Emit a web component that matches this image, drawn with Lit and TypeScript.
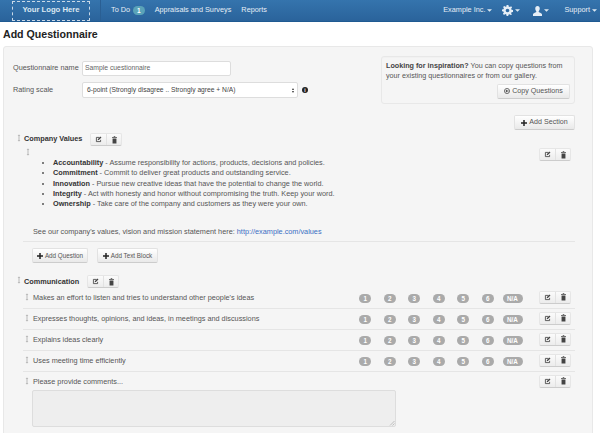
import { LitElement, html, css, svg } from "lit";
import { customElement } from "lit/decorators.js";

const caret = html`<svg class="caret" viewBox="0 0 6 3" width="5" height="3"><path d="M0 0h6L3 3z" fill="currentColor"/></svg>`;
const handle = html`<svg class="handle" viewBox="0 0 5 9" width="4" height="8"><path d="M2.500 0 4.200 1.800H3v5.400h1.200L2.500 9 .8 7.200H2V1.800H.8z" fill="#aaa"/></svg>`;
const plus = html`<svg class="ic" viewBox="0 0 8 8" width="6" height="6"><path d="M3 0h2v3h3v2H5v3H3V5H0V3h3z" fill="#222"/></svg>`;
const edit = svg`<path d="M6.500 2H2v6h6V5.500" fill="none" stroke="#444" stroke-width="1.200"/><path d="M3.800 6.200 4.200 4.400 8 .8l1.200 1.200-3.700 3.800z" fill="#444"/>`;
const trash = svg`<path d="M3.500 1V.2h2V1h2.200v1.200H1.300V1zM2 3h5v6.500H2z" fill="#444"/>`;
const tools = html`<span class="group">
  <span class="seg"><svg viewBox="0 0 10 10" width="7" height="7">${edit}</svg></span>
  <span class="seg"><svg viewBox="0 0 9 10" width="7" height="8">${trash}</svg></span>
</span>`;

const values: [string, string][] = [
  ["Accountability", "Assume responsibility for actions, products, decisions and policies."],
  ["Commitment", "Commit to deliver great products and outstanding service."],
  ["Innovation", "Pursue new creative ideas that have the potential to change the world."],
  ["Integrity", "Act with honesty and honor without compromising the truth. Keep your word."],
  ["Ownership", "Take care of the company and customers as they were your own."],
];
const questions = [
  "Makes an effort to listen and tries to understand other people's ideas",
  "Expresses thoughts, opinions, and ideas, in meetings and discussions",
  "Explains ideas clearly",
  "Uses meeting time efficiently",
];
const scale = ["1", "2", "3", "4", "5", "6", "N/A"];

@customElement("app-root")
export class AppRoot extends LitElement {
  static styles = css`
    :host { display: block; width: 600px; height: 433px; overflow: hidden; background: #fff;
      font-family: "Liberation Sans", Arial, sans-serif; font-size: 7.300px; line-height: 10.300px; color: #555; }
    * { box-sizing: border-box; }
    svg { display: block; flex: none; }
    .nav { height: 22px; display: flex; align-items: center; color: #e6eef6; font-size: 7.300px;
      background: linear-gradient(#3574ad, #2a639b); border-bottom: 1px solid #1f5a92; padding-left: 12px; }
    .logo { width: 78px; height: 20px; border: 1px dashed #c9d9e8; display: flex; align-items: center; justify-content: center;
      font-weight: bold; font-size: 7.700px; color: #dce8f2; margin-right: 10px; }
    .sep { width: 1px; height: 21px; background: #2a5f93; margin-right: 10px; }
    .links { display: flex; align-items: center; flex: 1; }
    .badge { background: #5aa3b8; color: #fff; border-radius: 6px; font-size: 6.500px; font-weight: bold; padding: 0 4px; margin: 0 10px 0 3px; line-height: 9px; }
    .l { margin-right: 10px; }
    .right { display: flex; align-items: center; padding-right: 3px; }
    .right span { display: flex; align-items: center; gap: 2px; }
    .caret { color: #dce8f2; }
    h1 { margin: 0; font-size: 10.600px; line-height: 14px; color: #222; font-weight: bold; padding: 5px 0 5px 3px; }
    .panel { margin-left: 3px; width: 590px; height: 400px; background: #f5f5f5; border: 1px solid #e8e8e8; border-radius: 3px; padding: 9px 17px 0 9px; }
    .top { display: flex; justify-content: space-between; align-items: flex-start; }
    .form { display: grid; grid-template-columns: 69px auto; row-gap: 6px; align-items: center; margin-top: 5px; justify-content: start; }
    .form label { color: #555; white-space: nowrap; }
    .input { width: 149px; height: 15px; background: #fff; border: 1px solid #ddd; border-radius: 2px; padding-left: 2px; display: flex; align-items: center; color: #666; font-size: 6.800px; }
    .selectrow { display: flex; align-items: center; gap: 4px; }
    .select { width: 216px; height: 16px; background: #fff; border: 1px solid #ddd; border-radius: 2px; padding: 0 3px 0 4px; display: flex; align-items: center; justify-content: space-between; color: #444; font-size: 6.700px; }
    .updown { display: flex; flex-direction: column; gap: 1px; }
    .updown i { display: block; width: 0; height: 0; border-left: 1.500px solid transparent; border-right: 1.500px solid transparent; }
    .updown i:first-child { border-bottom: 2.500px solid #333; }
    .updown i:last-child { border-top: 2.500px solid #333; }
    .info { width: 6px; height: 6px; background: #222; color: #fff; border-radius: 50%; font-size: 5px; line-height: 6px; text-align: center; font-weight: bold; }
    .well { width: 194px; height: 48px; border: 1px solid #e8e8e8; border-radius: 3px; background: #f5f5f5; padding: 4px 4px 0; color: #555; box-shadow: inset 0 1px 1px rgba(0,0,0,.02); font-size: 7.200px; }
    .well b { color: #444; }
    .wellbtn { display: flex; justify-content: flex-end; margin-top: 2px; }
    .btn { display: inline-flex; align-items: center; justify-content: center; gap: 2px; height: 15px; font-size: 7.100px; color: #555;
      background: linear-gradient(#fff, #e9e9e9); border: 1px solid #e2e2e2; border-bottom-color: #ccc; border-radius: 2px; white-space: nowrap; }
    .btn.small { font-size: 6.300px; }
    .addsec { display: flex; justify-content: flex-end; margin-top: 11px; }
    .group { display: inline-flex; height: 13px; border: 1px solid #e6e6e6; border-bottom-color: #ccc; border-radius: 2px; background: linear-gradient(#fbfbfb, #ececec); }
    .seg { width: 15px; display: flex; align-items: center; justify-content: center; }
    .seg + .seg { border-left: 1px solid #e2e2e2; }
    .sechead { display: flex; align-items: center; height: 13px; padding-left: 4px; }
    .sechead .handle { margin-right: 3px; margin-top: -3px; }
    .sechead b { color: #333; margin-right: 8px; }
    .block { margin-left: 10px; }
    .blockh { height: 12px; padding: 2px 0 0 3px; }
    .blockbody { padding-left: 10px; border-bottom: 1px solid #e5e5e5; padding-bottom: 4px; position: relative; }
    ul { margin: 0; padding: 0 0 0 20px; }
    li { line-height: 10.300px; color: #555; }
    li b { color: #333; }
    .see { margin: 18px 0 0; height: 10px; }
    a { color: #3a6fc4; text-decoration: none; }
    .blocktools { position: absolute; right: 4px; top: -10px; }
    .adds { display: flex; gap: 9px; margin: 6px 0 0 9px; }
    .q { display: flex; align-items: center; height: 21px; border-bottom: 1px solid #e5e5e5; margin-left: 10px; padding-left: 2px; }
    .q:last-child { border: 0; }
    .q .handle { margin-right: 4px; margin-top: -2px; }
    .q .t { flex: 1; color: #555; margin-top: -1px; }
    .q .group { margin-right: 4px; margin-top: -2px; }
    .pills { display: flex; margin-right: 14px; margin-top: 1px; }
    .pill { width: 24.500px; display: flex; justify-content: center; }
    .pill span { background: #aaa; color: #fff; font-weight: bold; font-size: 6.300px; line-height: 9px; height: 9px; min-width: 12px; border-radius: 5px; padding: 0 2px; text-align: center; }
    .pill.na { width: 25px; }
    .pill.na span { padding: 0 3px; min-width: 20px; }
    .ta { position: relative; width: 364px; height: 37px; background: #eee; border: 1px solid #ddd; border-radius: 2px; margin-left: 19px; }
    .grip { position: absolute; right: 0; bottom: 0; }
    .lastq { height: 18px; border: 0; padding-top: 2px; }
  `;

  render() {
    return html`
      <div class="nav">
        <div class="logo">Your Logo Here</div>
        <div class="sep"></div>
        <div class="links">
          <span>To Do</span><span class="badge">1</span>
          <span class="l">Appraisals and Surveys</span>
          <span class="l">Reports</span>
        </div>
        <div class="right">
          <span style="margin-right:10px">Example Inc. ${caret}</span>
          <span style="margin-right:13px"><svg viewBox="0 0 12 12" width="11" height="11"><path fill="#e6eef6" fill-rule="evenodd" d="M5 0h2l.3 1.600 1.300.6L10 1.300 11 2.700l-1 1.200.4 1.300 1.600.3v2l-1.600.3-.5 1.200 1 1.300L9.500 11l-1.300-1-1.200.5L6.800 12H5l-.3-1.600-1.200-.5-1.300 1L1 9.500l1-1.300-.5-1.200L0 6.800V5l1.600-.3.5-1.200-1-1.300L2.500 1l1.300 1 1-.5zM6 4a2 2 0 1 0 0 4 2 2 0 0 0 0-4z"/></svg>${caret}</span>
          <span style="margin-right:15px"><svg viewBox="0 0 10 11" width="9" height="10"><path fill="#e6eef6" d="M5 0c1.700 0 2.500 1.200 2.500 2.800S6.700 5.500 6.200 6.200c0 1 3.800 1.300 3.800 3V11H0V9.200c0-1.700 3.800-2 3.800-3C3.300 5.500 2.500 4.400 2.500 2.800S3.300 0 5 0z"/></svg>${caret}</span>
          <span>Support ${caret}</span>
        </div>
      </div>
      <h1>Add Questionnaire</h1>
      <div class="panel">
        <div class="top">
          <div class="form">
            <label>Questionnaire name</label>
            <div class="input">Sample cuestionnaire</div>
            <label>Rating scale</label>
            <div class="selectrow">
              <div class="select">6-point (Strongly disagree .. Strongly agree + N/A)<span class="updown"><i></i><i></i></span></div>
              <span class="info">i</span>
            </div>
          </div>
          <div class="well">
            <div><b>Looking for inspiration?</b> You can copy questions from your existing questionnaires or from our gallery.</div>
            <div class="wellbtn"><span class="btn" style="width:73px"><svg viewBox="0 0 8 8" width="6" height="6"><circle cx="4" cy="4" r="3.400" fill="none" stroke="#444" stroke-width="1"/><path d="M2 4l2-2v1.300h2v1.400H4V6z" fill="#444"/></svg>Copy Questions</span></div>
          </div>
        </div>
        <div class="addsec"><span class="btn" style="width:61px">${plus}Add Section</span></div>

        <div class="sechead" style="margin-top:3px">${handle}<b>Company Values</b>${tools}</div>
        <div class="block">
          <div class="blockh">${handle}</div>
          <div class="blockbody">
            <span class="blocktools">${tools}</span>
            <ul>${values.map(([a, b]) => html`<li><b>${a}</b> - ${b}</li>`)}</ul>
            <div class="see">See our company's values, vision and mission statement here: <a>http://example.com/values</a></div>
          </div>
          <div class="adds">
            <span class="btn small" style="width:56px">${plus}Add Question</span>
            <span class="btn small" style="width:61px">${plus}Add Text Block</span>
          </div>
        </div>

        <div class="sechead" style="margin-top:12px">${handle}<b>Communication</b>${tools}</div>
        <div>
          ${questions.map(q => html`<div class="q">${handle}<span class="t">${q}</span>
            <span class="pills">${scale.map(s => html`<span class="pill ${s === "N/A" ? "na" : ""}"><span>${s}</span></span>`)}</span>
            ${tools}</div>`)}
          <div class="q lastq">${handle}<span class="t">Please provide comments...</span>${tools}</div>
          <div class="ta"><svg class="grip" viewBox="0 0 6 6" width="6" height="6"><path d="M1 5.500 5.500 1M3.500 5.500l2-2" stroke="#aaa" stroke-width=".7"/></svg></div>
        </div>
      </div>`;
  }
}
